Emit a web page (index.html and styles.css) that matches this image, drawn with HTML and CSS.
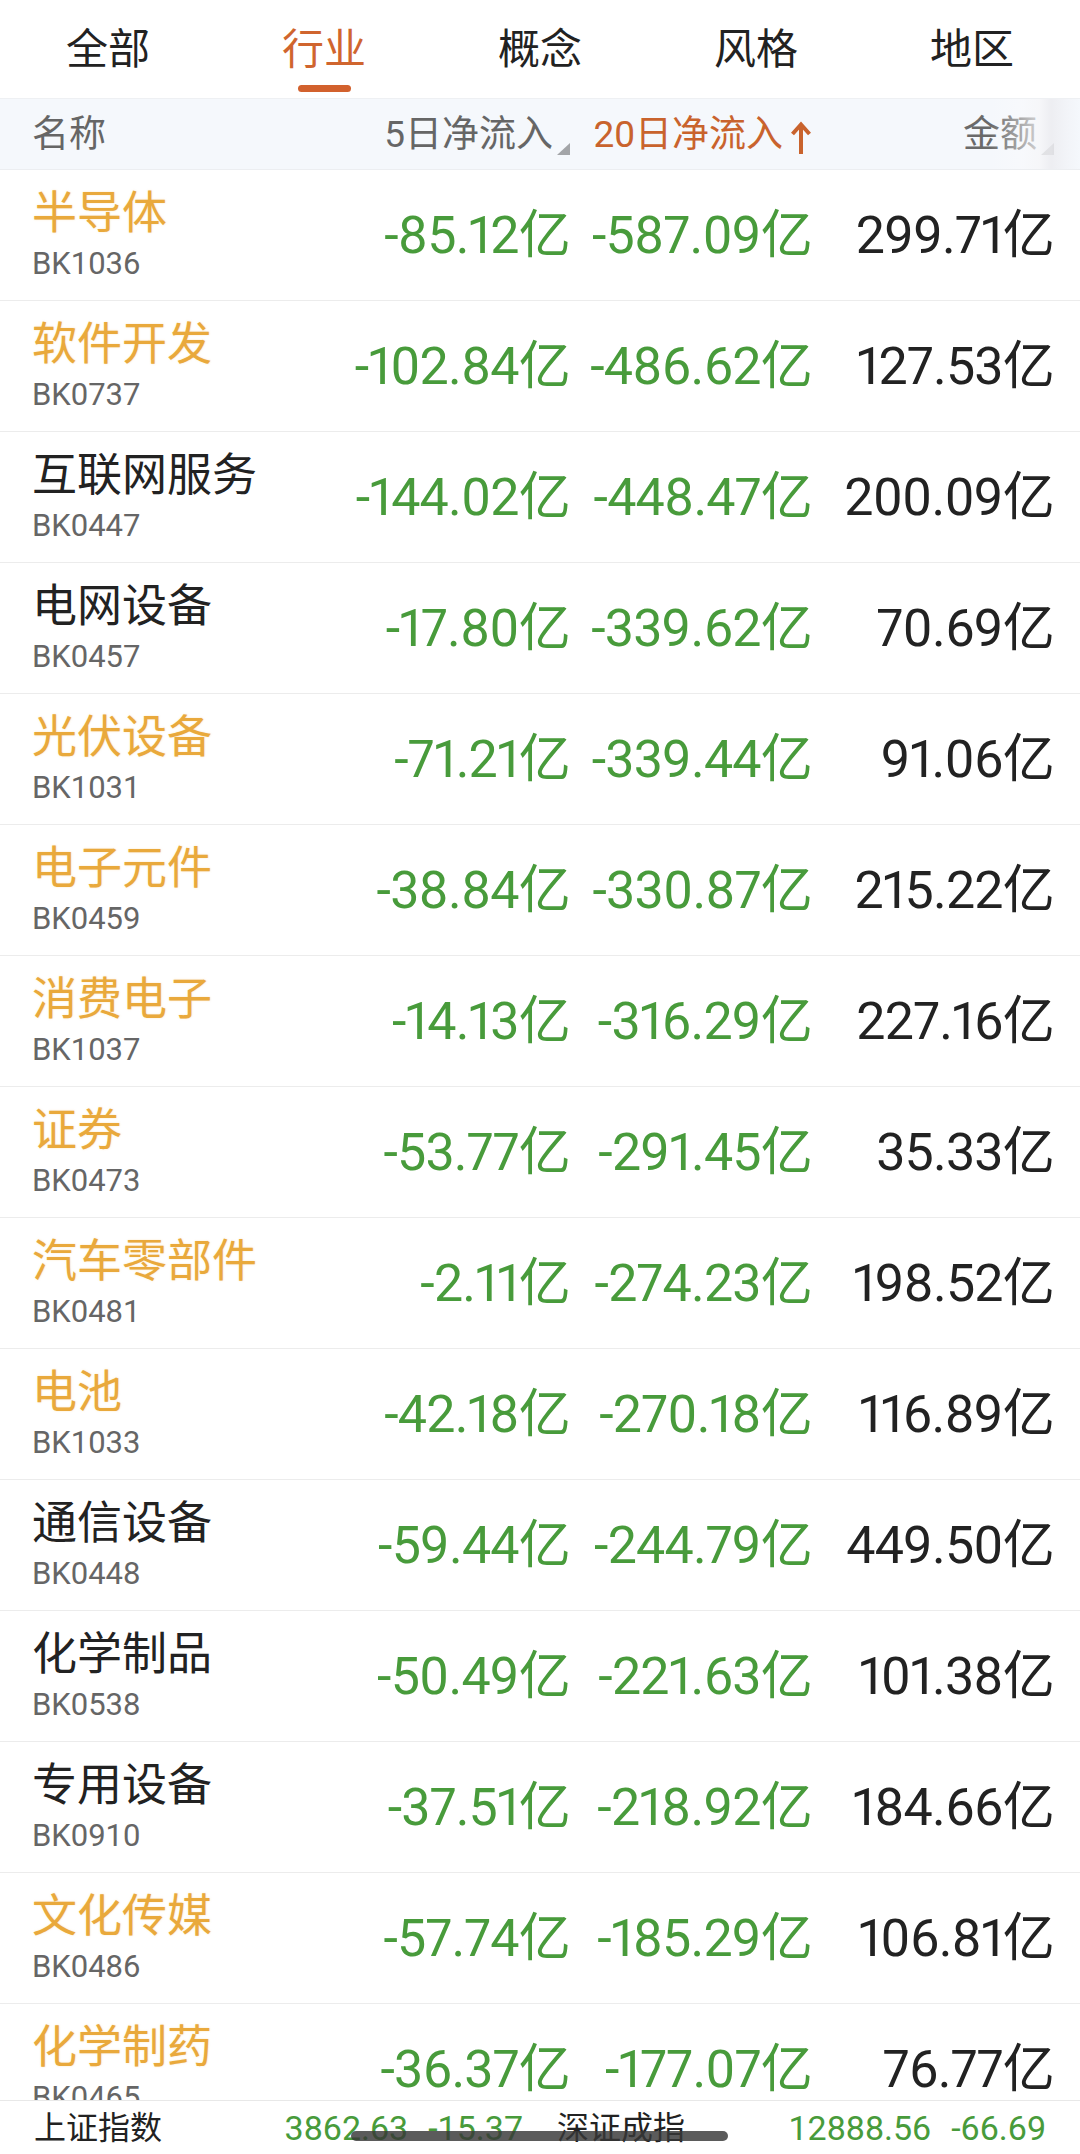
FILE: index.html
```html
<!DOCTYPE html>
<html lang="zh-CN">
<head>
<meta charset="utf-8">
<title>行业资金流向</title>
<link rel="stylesheet" href="styles.css">
</head>
<body>
<div class="page">
  <nav class="tabs">
    <div class="tab"><span class="tab-label">全部</span></div>
    <div class="tab active"><span class="tab-label">行业</span><span class="tab-bar"></span></div>
    <div class="tab"><span class="tab-label">概念</span></div>
    <div class="tab"><span class="tab-label">风格</span></div>
    <div class="tab"><span class="tab-label">地区</span></div>
  </nav>

  <div class="thead">
    <div class="th th-name">名称</div>
    <div class="th th-num">5日净流入<span class="sort-tri"></span></div>
    <div class="th th-num th-active">20日净流入<svg class="sort-up" width="22" height="34" viewBox="0 0 22 34"><path d="M11 33 V4 M2.5 13 L11 3.5 L19.5 13" fill="none" stroke="#c9632d" stroke-width="4" stroke-linejoin="miter"/></svg></div>
    <div class="th th-num th-fade"><span class="th-fade-txt">金额</span><span class="sort-tri"></span></div>
  </div>

  <div class="list">
    <div class="row"><div class="name"><span class="n gold">半导体</span><span class="code">BK1036</span></div><div class="v g">-85.12亿</div><div class="v g">-587.09亿</div><div class="v">299.71亿</div></div>
    <div class="row"><div class="name"><span class="n gold">软件开发</span><span class="code">BK0737</span></div><div class="v g">-102.84亿</div><div class="v g">-486.62亿</div><div class="v">127.53亿</div></div>
    <div class="row"><div class="name"><span class="n">互联网服务</span><span class="code">BK0447</span></div><div class="v g">-144.02亿</div><div class="v g">-448.47亿</div><div class="v">200.09亿</div></div>
    <div class="row"><div class="name"><span class="n">电网设备</span><span class="code">BK0457</span></div><div class="v g">-17.80亿</div><div class="v g">-339.62亿</div><div class="v">70.69亿</div></div>
    <div class="row"><div class="name"><span class="n gold">光伏设备</span><span class="code">BK1031</span></div><div class="v g">-71.21亿</div><div class="v g">-339.44亿</div><div class="v">91.06亿</div></div>
    <div class="row"><div class="name"><span class="n gold">电子元件</span><span class="code">BK0459</span></div><div class="v g">-38.84亿</div><div class="v g">-330.87亿</div><div class="v">215.22亿</div></div>
    <div class="row"><div class="name"><span class="n gold">消费电子</span><span class="code">BK1037</span></div><div class="v g">-14.13亿</div><div class="v g">-316.29亿</div><div class="v">227.16亿</div></div>
    <div class="row"><div class="name"><span class="n gold">证券</span><span class="code">BK0473</span></div><div class="v g">-53.77亿</div><div class="v g">-291.45亿</div><div class="v">35.33亿</div></div>
    <div class="row"><div class="name"><span class="n gold">汽车零部件</span><span class="code">BK0481</span></div><div class="v g">-2.11亿</div><div class="v g">-274.23亿</div><div class="v">198.52亿</div></div>
    <div class="row"><div class="name"><span class="n gold">电池</span><span class="code">BK1033</span></div><div class="v g">-42.18亿</div><div class="v g">-270.18亿</div><div class="v">116.89亿</div></div>
    <div class="row"><div class="name"><span class="n">通信设备</span><span class="code">BK0448</span></div><div class="v g">-59.44亿</div><div class="v g">-244.79亿</div><div class="v">449.50亿</div></div>
    <div class="row"><div class="name"><span class="n">化学制品</span><span class="code">BK0538</span></div><div class="v g">-50.49亿</div><div class="v g">-221.63亿</div><div class="v">101.38亿</div></div>
    <div class="row"><div class="name"><span class="n">专用设备</span><span class="code">BK0910</span></div><div class="v g">-37.51亿</div><div class="v g">-218.92亿</div><div class="v">184.66亿</div></div>
    <div class="row"><div class="name"><span class="n gold">文化传媒</span><span class="code">BK0486</span></div><div class="v g">-57.74亿</div><div class="v g">-185.29亿</div><div class="v">106.81亿</div></div>
    <div class="row"><div class="name"><span class="n gold">化学制药</span><span class="code">BK0465</span></div><div class="v g">-36.37亿</div><div class="v g">-177.07亿</div><div class="v">76.77亿</div></div>
  </div>

  <footer class="indexbar">
    <div class="idx">
      <span class="idx-name">上证指数</span>
      <span class="idx-vals"><span class="idx-v">3862.63</span><span class="idx-v">-15.37</span></span>
    </div>
    <div class="idx">
      <span class="idx-name">深证成指</span>
      <span class="idx-vals"><span class="idx-v">12888.56</span><span class="idx-v">-66.69</span></span>
    </div>
    <div class="home-ind"></div>
  </footer>
</div>
</body>
</html>
```

FILE: styles.css
```css
* { box-sizing: border-box; }

html, body {
  margin: 0;
  padding: 0;
  background: #ffffff;
}

body {
  font-family: Roboto, "Noto Sans CJK SC", sans-serif;
  color: #222222;
}

.page {
  width: 1080px;
  height: 2154px;
  display: flex;
  flex-direction: column;
  overflow: hidden;
  position: relative;
  background: #ffffff;
}

/* tabs */
.tabs {
  height: 98px;
  flex: none;
  display: grid;
  grid-template-columns: repeat(5, 1fr);
  background: #ffffff;
}

.tab {
  display: flex;
  flex-direction: column;
  align-items: center;
  padding-top: 22px;
}

.tab-label {
  font-size: 42px;
  line-height: 56px;
  color: #222222;
}

.tab.active .tab-label {
  color: #d0652e;
}

.tab-bar {
  margin-top: 7px;
  width: 53px;
  height: 7px;
  border-radius: 4px;
  background: #d2612d;
}

/* header */
.thead {
  height: 72px;
  flex: none;
  display: grid;
  grid-template-columns: 1fr 242px 242px 242px;
  align-items: center;
  padding: 2px 26px 0 32px;
  background: #f5f8fc;
  border-top: 1px solid #eef0f3;
  border-bottom: 1px solid #eceef1;
  position: relative;
}

.th {
  font-size: 37px;
  line-height: 48px;
  color: #666666;
  white-space: nowrap;
}

.th-num {
  text-align: right;
}

.th-active {
  color: #c9632d;
}

.sort-up {
  display: inline-block;
  vertical-align: -8px;
  margin-left: 7px;
}

.sort-tri {
  display: inline-block;
  width: 13px;
  height: 12px;
  margin-left: 4px;
  vertical-align: -8px;
  background: #a3a5a8;
  clip-path: polygon(100% 0, 100% 100%, 0 100%);
}

.th-fade {
  color: #6a6a6a;
}

.thead::after {
  content: "";
  position: absolute;
  right: 0;
  top: 0;
  width: 90px;
  height: 100%;
  pointer-events: none;
  background: linear-gradient(to right,
    rgba(250, 251, 253, 0) 0%,
    rgba(250, 250, 252, 0.45) 35%,
    rgba(246, 246, 248, 0.75) 55%,
    rgba(236, 236, 240, 0.85) 68%,
    rgba(240, 241, 245, 0.6) 85%,
    rgba(245, 248, 252, 0.2) 100%);
}

/* list */
.list {
  flex: 1;
  overflow: hidden;
}

.row {
  height: 131px;
  display: grid;
  grid-template-columns: 1fr 242px 242px 242px;
  align-items: center;
  padding: 0 26px 0 32px;
  border-bottom: 1px solid #ececec;
}

.name {
  align-self: stretch;
  display: flex;
  flex-direction: column;
  padding-top: 18px;
  white-space: nowrap;
}

.n {
  font-size: 45px;
  line-height: 52px;
  color: #222222;
}

.n.gold {
  color: #e9a93c;
  text-shadow: 0 0 2px rgba(240, 180, 70, 0.35);
}

.code {
  margin-top: 4px;
  font-size: 31px;
  line-height: 40px;
  color: #666666;
}

.v {
  font-size: 52px;
  line-height: 60px;
  letter-spacing: -0.8px;
  font-variant-numeric: proportional-nums;
  text-align: right;
  color: #222222;
  white-space: nowrap;
  padding-top: 1px;
}

.v.g {
  color: #489b3b;
}

/* bottom index bar */
.indexbar {
  height: 54px;
  flex: none;
  display: grid;
  grid-template-columns: 1fr 1fr;
  column-gap: 34px;
  align-items: center;
  padding: 0 34px;
  background: #ffffff;
  border-top: 1px solid #e8e8e8;
  position: relative;
}

.idx {
  display: flex;
  align-items: center;
  justify-content: space-between;
  white-space: nowrap;
}

.idx-name {
  font-size: 32px;
  line-height: 44px;
  color: #222222;
}

.idx-vals {
  display: flex;
  gap: 20px;
}

.idx-v {
  font-size: 34px;
  line-height: 44px;
  color: #489b3b;
}

.home-ind {
  position: absolute;
  left: 351px;
  top: 30px;
  width: 377px;
  height: 10px;
  border-radius: 5px;
  background: rgba(55, 55, 55, 0.82);
}
```
